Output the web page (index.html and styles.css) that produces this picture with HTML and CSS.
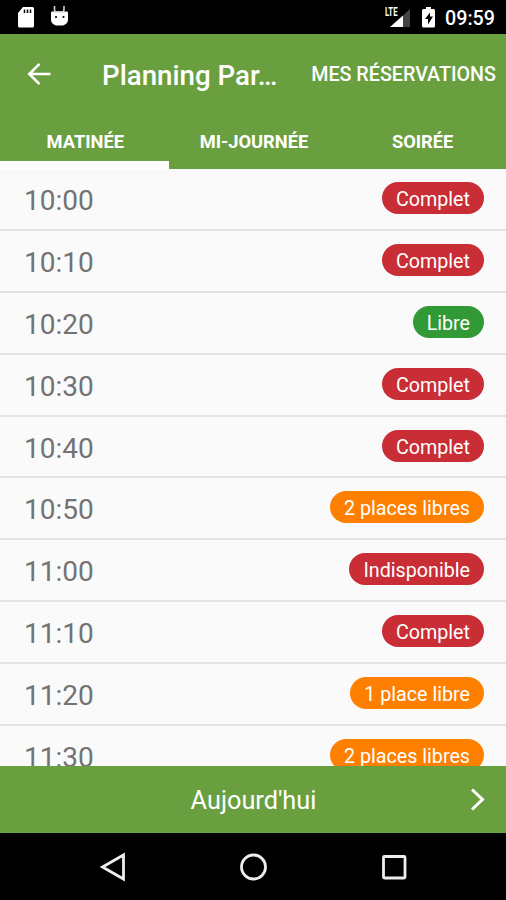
FILE: index.html
```html
<!DOCTYPE html>
<html lang="fr">
<head>
<meta charset="utf-8">
<title>Planning</title>
<link rel="stylesheet" href="styles.css">
</head>
<body>
<div class="status">
  <svg class="status-left" width="60" height="24" viewBox="0 0 60 24">
    <path fill="#fff" d="M7 2h9.500q1.500 0 1.500 1.500v17.500q0 1.500-1.500 1.500H3.500q-1.500 0-1.500-1.500V8z"/>
    <path stroke="#000" stroke-width="1.500" d="M8.500 4.500v3.500M11.500 4.500v3.500M14.500 4.500v3.500"/>
    <path fill="#fff" d="M35 11V7.500q0-1 1-1h15q1 0 1 1V15q0 2-2 4l-3 1.500h-7L37 19q-2-2-2-4z"/>
    <path stroke="#ddd" stroke-width="1.500" fill="none" d="M38.500 1v4l1 2h7.500l1-2V1"/>
    <circle cx="40" cy="12" r="1.100"/><circle cx="47.500" cy="12" r="1.100"/>
  </svg>
  <div class="status-right">
    <svg width="52" height="24" viewBox="0 0 52 24">
      <path fill="#444" d="M25 4v18H6z"/>
      <path fill="#000" d="M0 0h14v12H0z"/>
      <path fill="#fff" d="M18 10.500V22H5z"/>
      <text class="lte" x="0" y="11" textLength="12.500" lengthAdjust="spacingAndGlyphs">LTE</text>
      <path fill="#fff" d="M41 2h5v2h2.500Q50 4 50 5.500v15.500q0 1.500-1.500 1.500h-10Q37 22.500 37 21V5.500Q37 4 38.500 4H41z"/>
      <path d="M45 7.500 40 14h3v5.500l5-8h-3z"/>
    </svg>
    <span class="clock">09:59</span>
  </div>
</div>
<header>
  <div class="toolbar">
    <svg class="back" width="24" height="24" viewBox="0 0 24 24" fill="none" stroke="#fff" stroke-width="2.600"><path d="M23.500 12H2.500M12.500 1.800 2.300 12l10.200 10.200"/></svg>
    <h1>Planning Par…</h1>
    <span class="menu">MES RÉSERVATIONS</span>
  </div>
  <nav>
    <span class="tab active">MATINÉE</span>
    <span class="tab">MI-JOURNÉE</span>
    <span class="tab">SOIRÉE</span>
  </nav>
</header>
<main>
  <div class="row"><span class="time">10:00</span><span class="pill full">Complet</span></div>
  <div class="row"><span class="time">10:10</span><span class="pill full">Complet</span></div>
  <div class="row"><span class="time">10:20</span><span class="pill free">Libre</span></div>
  <div class="row"><span class="time">10:30</span><span class="pill full">Complet</span></div>
  <div class="row"><span class="time">10:40</span><span class="pill full">Complet</span></div>
  <div class="row"><span class="time">10:50</span><span class="pill some">2 places libres</span></div>
  <div class="row"><span class="time">11:00</span><span class="pill full">Indisponible</span></div>
  <div class="row"><span class="time">11:10</span><span class="pill full">Complet</span></div>
  <div class="row"><span class="time">11:20</span><span class="pill some">1 place libre</span></div>
  <div class="row"><span class="time">11:30</span><span class="pill some">2 places libres</span></div>
</main>
<footer>
  <span></span>
  <span class="day">Aujourd'hui</span>
  <svg class="next" width="16" height="24" viewBox="0 0 16 24" fill="none" stroke="#fff" stroke-width="3"><path d="M2 1.500l10.500 10L2 21.500"/></svg>
</footer>
<div class="navbar">
  <svg width="28" height="30" viewBox="0 0 28 30"><path d="M24.500 3v24L3.500 15z"/></svg>
  <svg width="28" height="30" viewBox="0 0 28 30"><circle cx="13.500" cy="15" r="12"/></svg>
  <svg width="28" height="30" viewBox="0 0 28 30"><rect x="3.500" y="4.500" width="21.500" height="21.500" rx="1"/></svg>
</div>
</body>
</html>
```
FILE: styles.css
```css
* { box-sizing: border-box; }
body {
  margin: 0;
  width: 506px;
  height: 900px;
  display: flex;
  flex-direction: column;
  overflow: hidden;
  background: #000;
  color: #fff;
  font-family: Roboto, sans-serif;
  white-space: nowrap;
}
svg { display: block; flex: none; }
.status {
  height: 34px;
  flex: none;
  display: flex;
  justify-content: space-between;
  padding: 5px 11px 0 16px;
}
.status-right { display: flex; }
.lte { fill: #fff; font-size: 13px; font-weight: 700; }
.clock { margin-left: 8px; font-size: 19.700px; font-weight: 500; line-height: 27px; }
header { height: 135px; flex: none; background: #6a9f3f; }
.toolbar { height: 80px; display: flex; align-items: center; padding: 0 10px 0 27px; }
h1 { margin: 2px 0 0 51px; font-size: 27.700px; font-weight: 500; }
.menu { margin: 1px 0 0 auto; font-size: 19.700px; font-weight: 500; }
nav { height: 55px; display: flex; }
.tab {
  width: 168.670px;
  padding-left: 2px;
  border-bottom: 8px solid transparent;
  text-align: center;
  font-size: 18.300px;
  font-weight: 700;
  line-height: 55px;
}
.tab.active { border-bottom-color: #fff; }
main { height: 597px; flex: none; overflow: hidden; background: #fafafa; }
.row {
  height: 61.900px;
  display: flex;
  justify-content: space-between;
  align-items: flex-start;
  padding: 13px 22px 0 24px;
  border-bottom: 2px solid #e3e3e3;
}
.time { color: #737373; font-size: 28px; line-height: 38px; }
.pill {
  height: 32px;
  padding: 0 14px;
  border-radius: 16px;
  font-size: 19.700px;
  line-height: 35px;
}
.full { background: #c92d35; }
.free { background: #319a37; }
.some { background: #ff8000; }
footer {
  height: 67px;
  flex: none;
  display: grid;
  grid-template-columns: 1fr auto 1fr;
  align-items: center;
  padding: 0 20px;
  background: #6a9f3f;
}
.day { margin: 2px 0 0 1px; font-size: 25.300px; }
.next { justify-self: end; }
.navbar {
  height: 67px;
  display: flex;
  justify-content: space-between;
  align-items: center;
  padding: 0 98px 0 99px;
}
.navbar svg { fill: none; stroke: #eee; stroke-width: 2.800; }
```
